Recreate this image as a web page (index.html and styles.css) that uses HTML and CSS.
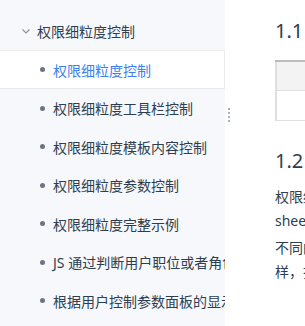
FILE: index.html
```html
<!DOCTYPE html>
<html>
<head>
<meta charset="utf-8">
<title>权限细粒度控制</title>
<link rel="stylesheet" href="styles.css">
</head>
<body>
  <div class="sidebar">
    <div class="group-title">
      <svg class="chevron" width="8" height="5" viewBox="0 0 8 5"><path d="M0.5 0.5 L4 4 L7.5 0.5" fill="none" stroke="#8a8f99" stroke-width="1.1"/></svg>
      <span>权限细粒度控制</span>
    </div>
    <div class="item active"><i class="dot"></i>权限细粒度控制</div>
    <div class="item"><i class="dot"></i>权限细粒度工具栏控制</div>
    <div class="item"><i class="dot"></i>权限细粒度模板内容控制</div>
    <div class="item"><i class="dot"></i>权限细粒度参数控制</div>
    <div class="item"><i class="dot"></i>权限细粒度完整示例</div>
    <div class="item"><i class="dot"></i>JS 通过判断用户职位或者角色控制按钮</div>
    <div class="item"><i class="dot"></i>根据用户控制参数面板的显示与隐藏</div>
  </div>
  <div class="main">
    <div class="handle"><b></b><b></b><b></b><b></b></div>
    <h2>1.1 概述</h2>
    <table class="grid">
      <tr class="head"><td class="first">版本</td><td>功能变动</td></tr>
      <tr><td class="first">11.0</td><td>-</td></tr>
    </table>
    <h2 class="second">1.2 应用场景</h2>
    <p>权限细粒度控制可以对模板中的工具栏按钮、单元格内容、<br>sheet 页以及参数面板进行更细致的权限划分。</p>
    <p>不同的用户登录数据决策系统后，看到的模板内容不一<br>样，打开的按钮也不相同。</p>
  </div>
</body>
</html>
```

FILE: styles.css
```css
* {
  box-sizing: border-box;
}

body {
  margin: 0;
  height: 326px;
  display: flex;
  overflow: hidden;
  font-family: "Noto Sans", "Noto Sans CJK SC", sans-serif;
  color: #2c3e50;
  background-color: #fff;
}

.sidebar {
  width: 225px;
  flex-shrink: 0;
  background-color: #f7f8fc;
  padding-top: 12px;
  overflow: hidden;
  font-size: 14px;
}

.group-title {
  height: 38px;
  display: flex;
  align-items: center;
  padding-left: 22px;
  font-size: 14px;
  color: #2c3e50;
}

.chevron {
  margin-right: 7px;
}

.item {
  height: 38.5px;
  display: flex;
  align-items: center;
  padding-left: 40px;
  white-space: nowrap;
  color: #2c3e50;
}

.item.active {
  height: 39px;
  background-color: #fff;
  border-top: 1px solid #ebebeb;
  border-bottom: 1px solid #ebebeb;
  border-right: 1px solid #ebebeb;
  color: #3c7ff0;
}

.dot {
  width: 5px;
  height: 5px;
  border-radius: 50%;
  background-color: #6b7385;
  margin-right: 8px;
  flex-shrink: 0;
}

.main {
  flex: 1;
  position: relative;
  padding-left: 50px;
  overflow: hidden;
  white-space: nowrap;
}

.handle {
  position: absolute;
  left: 3px;
  top: 108px;
  display: flex;
  flex-direction: column;
  gap: 2px;
}

.handle b {
  width: 2px;
  height: 2px;
  background-color: #aab2c0;
}

h2 {
  margin: 17px 0 0;
  font-size: 20px;
  font-weight: 400;
  line-height: 28px;
}

h2.second {
  margin-top: 26px;
}

.grid {
  margin-top: 15px;
  width: 420px;
  border-collapse: collapse;
  border-top: 2px solid #bcbcbc;
  border-left: 2px solid #dfdfdf;
  font-size: 14px;
}

.grid td {
  height: 30px;
  padding: 0 12px;
  border-bottom: 1px solid #dfdfdf;
  border-right: 1px solid #dfdfdf;
  color: transparent;
}

.grid td.first {
  width: 140px;
}

.grid .head td {
  height: 29px;
  background-color: #f3f3f3;
}

p {
  margin: 10px 0 0;
  font-size: 14px;
  line-height: 24.5px;
}

p + p {
  margin-top: 2px;
}
```
